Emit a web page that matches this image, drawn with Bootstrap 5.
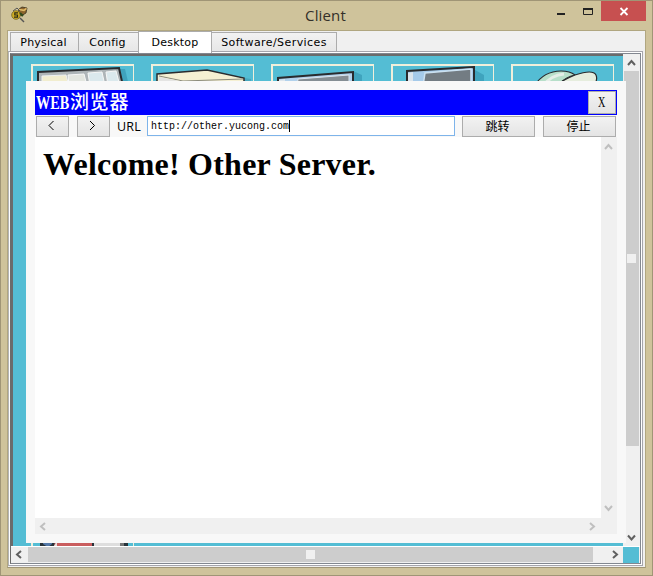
<!DOCTYPE html>
<html lang="zh-CN">
<head>
<meta charset="utf-8">
<title>Client</title>
<link href="https://cdn.jsdelivr.net/npm/bootstrap@5.3.0/dist/css/bootstrap.min.css" rel="stylesheet">
<style>
body{margin:0;font-family:"DejaVu Sans",sans-serif;font-size:11px;line-height:1;color:#000}
svg{display:block}
.win{width:653px;height:576px;background:#cfc39b;border:1px solid #a09576;padding:0 6px 7px 6px}
.titlebar{height:29px;flex:none}
.titlebar .caption{font:15px/29px "Open Sans","Noto Sans",sans-serif;color:#333029;padding-left:64px;letter-spacing:.15px}
.appicon{width:28px;padding:5px 0 0 4px}
.winbtns{width:100px;margin-right:-6px}
.closebtn{width:45px;height:20px;background:#c75050;margin-right:6px}
.client{background:#f0f0f0;border:1px solid #b0a680;border-bottom-color:#a09576;min-height:0}
.tabs{height:20px;padding-left:2px;flex:none;position:relative;z-index:1}
.tabitem{height:19px;border:1px solid #acacac;border-bottom:0;background:linear-gradient(#f2f2f2,#e7e7e7);margin-right:-1px;text-align:center;line-height:20px;white-space:nowrap;letter-spacing:.2px;padding-right:2px}
.tabitem.wide{letter-spacing:.42px;padding-right:0}
.tabitem.on{height:22px;background:#fff;line-height:21px;margin-bottom:-2px;position:relative;z-index:2;padding-right:0}
.pane{border:1px solid #a5a5ac;border-left-color:#b4b4b4;padding:1px;background:#fff;margin:0 2px 1px 0;min-height:0}
.inner{border:1px solid #828790;border-left-color:#6b6b6b;background:#f0f0f0;min-height:0;position:relative}
.canvas{width:612px;flex:none;background:#54bdd4;border-top:2px solid #6b6b6b;border-left:2px solid #6b6b6b;overflow:hidden;padding:8px 0 0 18px;margin-right:1px}
.tiles{gap:17px;width:620px}
.tile{width:103px;height:103px;border:2px solid #f0efdb;border-right-width:1px;flex:none}
.tile.low{margin-top:345px;height:60px}
.vbar{width:15px}
.vthumb{height:375px;background:#cdcdcd}
.grip{width:9px;height:9px;background:#f0f0f0}
.hbar{height:17px;border-top:1px solid #fff;flex:none}
.hthumb{width:565px;background:#cdcdcd;height:15px;padding-right:1px}
.corner{width:16px;background:#54bdd4;height:16px;margin-left:auto;margin-right:1px}
.browser{position:absolute;left:15px;top:27px;width:600px;height:462px;background:#f8f8f8;padding:9px}
.bhead{height:25px;background:#00f;padding:1px;color:#fff;flex:none}
.bhead .name{font:500 19px/20px "Noto Sans CJK SC",sans-serif;white-space:nowrap;letter-spacing:.7px}
.bhead .name b{display:inline-block;font:bold 19px/20px "Liberation Serif",serif;letter-spacing:0;width:46px;margin-right:-12px;transform:scaleX(.75);transform-origin:0 50%}
.wbtn{border:1px solid #acacac;background:linear-gradient(#f2f2f2,#e4e4e4);height:21px;display:flex;align-items:center;justify-content:center;font:12px/17px "Noto Sans CJK SC",sans-serif;padding:0 2px 2px 0;border-radius:0;color:#000}
.wbtn.x{width:28px;height:23px;font:13px/20px "Liberation Serif",serif;padding:0 1px 0 0}
.xglyph{display:inline-block;transform:scale(.78,1.1)}
.tools{height:22px;padding:1px 1px 0;flex:none}
.urllabel{font:12.5px/21px "Open Sans",sans-serif;width:37px;padding-left:7px;letter-spacing:.2px}
.urlbox{width:308px;height:20px;border:1px solid #7eb4ea;background:#fff;font:10px/18px "Liberation Mono",monospace;padding-left:3px}
.urlbox span{display:inline-block;transform:translateY(1px) scaleY(1.08)}
.caret{width:1px;height:12px;background:#000}
.page{background:#fff}
.page h1{font:bold 32px/37px "Liberation Serif",serif;margin:0;padding:9px 0 0 8px;letter-spacing:.23px}
.inbar{background:#f0f0f0;width:16px;padding:6px 0 6px}
.inbarh{background:#f0f0f0;height:16px;flex:none;padding:0 21px 0 4px}
.ar{fill:none;stroke:#606060;stroke-width:2}
.ar.dim{stroke:#bfbfbf}
.thin{fill:none;stroke:#000;stroke-width:1}
</style>
<script src="https://cdn.jsdelivr.net/npm/bootstrap@5.3.0/dist/js/bootstrap.bundle.min.js"></script>
</head>
<body class="overflow-hidden">
<div class="win d-flex flex-column">
  <div class="titlebar d-flex">
    <div class="appicon"><svg width="17" height="18" viewBox="0 0 17 18"><path d="M8 3l3-2 5 1-1 5-5 3-3-3z" fill="#8b642c" stroke="#38301e" stroke-width=".8"/><path d="M8 3.500l5 .8 2.500-2" fill="none" stroke="#dfb967" stroke-width="1.600"/><path d="M2 5l4-3 3 3" fill="none" stroke="#555" /><path d="M9 12l4 4" stroke="#555" stroke-width="1.500"/><circle cx="5" cy="9" r="4.300" fill="#d1ae23" stroke="#6f6226" stroke-width=".8"/><path d="M7 6.800H3.800V9h2.700v2.200H3" fill="none" stroke="#2b2b16" stroke-width="1.200"/><path d="M9 7l3 3" stroke="#2f4a1b" stroke-width="2"/></svg></div>
    <div class="caption flex-grow-1 text-center">Client</div>
    <div class="winbtns d-flex">
      <svg width="48" height="20" class="flex-grow-1"><path d="M5 13h8" stroke="#222" stroke-width="2"/><path d="M31.500 7.500h9v6h-9z" fill="none" stroke="#222"/><path d="M31 8h10" stroke="#222" stroke-width="2"/></svg>
      <div class="closebtn"><svg width="45" height="20"><path d="M19.500 7l7 7M26.500 7l-7 7" stroke="#fff" stroke-width="1.800"/></svg></div>
    </div>
  </div>
  <div class="client flex-grow-1 d-flex flex-column">
    <div class="tabs d-flex align-items-end">
      <div class="tabitem" style="width:69px">Physical</div>
      <div class="tabitem" style="width:61px">Config</div>
      <div class="tabitem on" style="width:74px">Desktop</div>
      <div class="tabitem wide" style="width:126px">Software/Services</div>
    </div>
    <div class="pane flex-grow-1 d-flex">
      <div class="inner flex-grow-1 d-flex flex-column">
        <div class="flex-grow-1 d-flex" style="min-height:0">
          <div class="canvas">
            <div class="tiles d-flex">
              <div class="tile"><svg width="100" height="20"><path d="M85 3h7l4 17h-12z" fill="#3fa3bd"/><path d="M5 20V6L86 2l4 18z" fill="#aeb5b8" stroke="#292b2e" stroke-width="2"/><path d="M9 20v-10l24-1 3 11z" fill="#f1edcf" stroke="#eef1f3"/><path d="M36 20l-1-11 16-1 3 12z" fill="#e3e6e0" stroke="#f6f7f7"/><path d="M57 20l-2-13 14-1 3 14zM75 20l-2-14 10-1 4 15z" fill="#dbe9ed" stroke="#f6f7f7"/></svg></div>
              <div class="tile"><svg width="100" height="20"><path d="M92 12l6 1v7h-8z" fill="#46a8c0"/><path d="M4 20V8L54 4l37 8v8z" fill="#f5f0d3" stroke="#292b2e" stroke-width="1.500"/><path d="M6 10l24 5 60-2" fill="none" stroke="#8b8b7c" stroke-width="1"/><path d="M6 11v9h18l3-5z" fill="#e4e4e3"/></svg></div>
              <div class="tile"><svg width="100" height="20"><path d="M80 5l9 4v11h-9z" fill="#3fa3bd"/><path d="M5 20v-8l75-6v14z" fill="#b1d1ec" stroke="#292b2e" stroke-width="2"/><path d="M12 20v-7l-6 1v6z" fill="#dce5ed"/><path d="M24 20l1-7 51-4v11z" fill="#858e94" stroke="#d9e4ec"/></svg></div>
              <div class="tile"><svg width="100" height="20"><path d="M82 4l9 5v11h-9z" fill="#3fa3bd"/><path d="M14 20V5l67-4v19z" fill="#a5caea" stroke="#292b2e" stroke-width="2"/><path d="M20 20V6l-5 1v13z" fill="#dce5ed"/><path d="M30 20l2-13 46-4v17z" fill="#737c83" stroke="#cbe1f2" stroke-width="1.500"/></svg></div>
              <div class="tile"><svg width="100" height="20"><path d="M21 20Q31 5 48 5q9 0 14 4-9 2-16 9z" fill="#b7dfca" stroke="#292b2e" stroke-width="1.200"/><path d="M42 20q8-6 20-11 18-6 21 0 2 5-2 11z" fill="#e6edde" stroke="#292b2e" stroke-width="1.200"/><path d="M30 20q8-11 21-12" stroke="#e4eee8" stroke-width="3" fill="none"/></svg></div>
            </div>
            <div class="tile low"><svg width="100" height="60"><path d="M7 20h88v40H7z" fill="#28333a"/><path d="M10 20h9v10l-4 3-5-3z" fill="#5479a9"/><path d="M23 20h36v15l1 5H20z" fill="#c95d5e"/><path d="M19 35l5-8v13z" fill="#e8dedc"/><path d="M61 20h26v20H61z" fill="#dedede"/><path d="M87 20h4v20h-4z" fill="#777"/></svg></div>
          </div>
          <div class="vbar d-flex flex-column align-items-center">
            <svg width="15" height="17"><path class="ar" d="M4 11l3.500-4 3.500 4"/></svg>
            <div class="vthumb w-100 d-flex align-items-center justify-content-center"><div class="grip"></div></div>
            <svg width="15" height="17" class="mt-auto"><path class="ar" d="M4 6.500l3.500 4 3.500-4"/></svg>
          </div>
        </div>
        <div class="hbar d-flex">
          <svg width="17" height="15"><path class="ar" d="M10 4L6 7.500l4 3.500"/></svg>
          <div class="hthumb d-flex align-items-center justify-content-center"><div class="grip"></div></div>
          <svg width="29" height="15"><path class="ar" d="M20 4l4 3.500-4 3.500"/></svg>
          <div class="corner"></div>
        </div>
        <div class="browser d-flex flex-column">
          <div class="bhead d-flex">
            <div class="name flex-grow-1"><b>WEB</b>浏览器</div>
            <button class="wbtn x"><span class="xglyph">X</span></button>
          </div>
          <div class="tools d-flex">
            <button class="wbtn" style="width:33px"><svg width="9" height="9"><path class="thin" d="M6.500 0L2 4.500 6.500 9"/></svg></button>
            <button class="wbtn ms-2" style="width:33px"><svg width="9" height="9"><path class="thin" d="M2 0l4.500 4.500L2 9"/></svg></button>
            <div class="urllabel">URL</div>
            <div class="urlbox d-flex align-items-center"><span>http://other.yucong.com</span><div class="caret"></div></div>
            <button class="wbtn ms-auto" style="width:73px">跳转</button>
            <button class="wbtn ms-2" style="width:73px">停止</button>
          </div>
          <div class="flex-grow-1 d-flex page">
            <div class="flex-grow-1"><h1>Welcome! Other Server.</h1></div>
            <div class="inbar d-flex flex-column justify-content-between">
              <svg width="16" height="7"><path class="ar dim" d="M4 6l3.500-4L11 6"/></svg>
              <svg width="16" height="7"><path class="ar dim" d="M4 1l3.500 4L11 1"/></svg>
            </div>
          </div>
          <div class="inbarh d-flex align-items-center justify-content-between">
            <svg width="8" height="9"><path class="ar dim" d="M6 1L2 4.500 6 8"/></svg>
            <svg width="8" height="9"><path class="ar dim" d="M2 1l4 3.500L2 8"/></svg>
          </div>
        </div>
      </div>
    </div>
  </div>
</div>
</body>
</html>
